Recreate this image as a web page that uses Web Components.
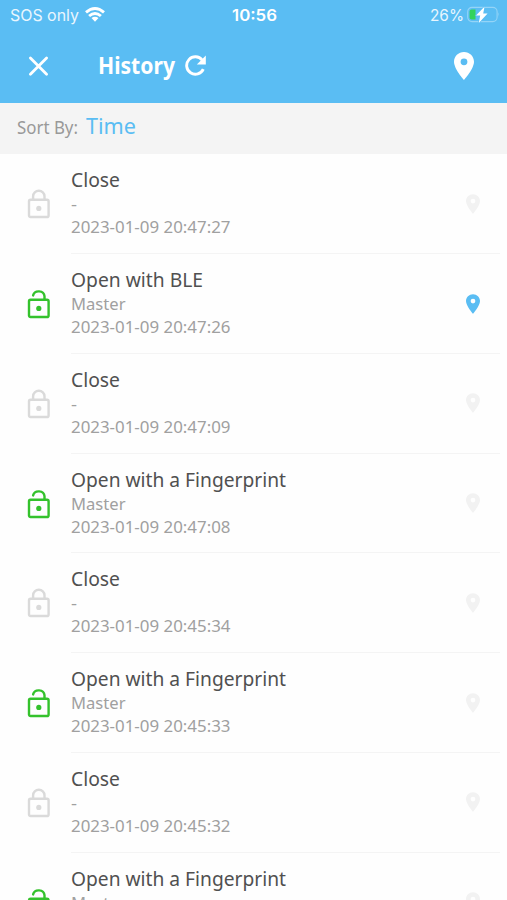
<!DOCTYPE html>
<html lang="en">
<head>
<meta charset="utf-8">
<meta name="viewport" content="width=device-width">
<title>History</title>
<style>
html,body{margin:0;height:100%;overflow:hidden;background:#fefefe}
</style>
</head>
<body>
<history-app></history-app>
<script>
const define = (name, html, setup) => customElements.define(name, class extends HTMLElement {
  connectedCallback() {
    if (this.shadowRoot) return;
    const root = this.attachShadow({ mode: 'open' });
    root.innerHTML = typeof html === 'function' ? html(this) : html;
    if (setup) setup(this, root);
  }
});

// One line of text condensed or widened to the width given in its "w" attribute.
define('fit-text', `<style>:host{display:block;white-space:nowrap}span{display:inline-block;transform-origin:0 50%}</style><span><slot></slot></span>`,
  (host, root) => {
    const w = Number(host.getAttribute('w'));
    const span = root.querySelector('span');
    host.style.width = w + 'px';
    const natural = span.getBoundingClientRect().width;
    if (w && natural) span.style.transform = `scaleX(${w / natural})`;
  });

define('map-pin', `<style>:host{display:block}svg{display:block;width:100%;height:100%}</style>
<svg viewBox="0 0 20 28"><path fill="currentColor" fill-rule="evenodd" d="M10 0C4.4 0 0 4.3 0 9.8C0 17 10 28 10 28S20 17 20 9.8C20 4.3 15.6 0 10 0ZM10 6.4a3.4 3.4 0 1 1 0 6.8a3.4 3.4 0 0 1 0-6.8Z"/></svg>`);

define('lock-icon', host => `<style>:host{display:block;width:24px;height:30px}svg{display:block}</style>
<svg width="24" height="30" viewBox="0 0 24 30" fill="none" stroke="currentColor" stroke-width="2.4">
<rect x="2" y="10.8" width="19.6" height="17.2" rx="1.6"/>
<path stroke-linecap="round" d="${host.hasAttribute('open') ? 'M6.1 6.4A5.8 5.3 0 0 1 17.5 7.2V10.5' : 'M6.1 10.5V7.2A5.7 5.5 0 0 1 17.5 7.2V10.5'}"/>
<circle cx="11.8" cy="19.4" r="2.6" fill="currentColor" stroke="none"/></svg>`);

define('status-bar', `<style>
:host{display:grid;grid-template-columns:1fr auto 1fr;align-items:center;height:30px;box-sizing:border-box;padding:0 7px 0 10px;font:16px/20px Inter,sans-serif;color:#e9f6fe}
div{display:flex;align-items:center}
.l{gap:6px}.r{justify-content:flex-end;gap:3px}
.t{font-weight:600;color:#fff;margin-left:-2px}
svg{display:block}
</style>
<div class="l"><fit-text w="69">SOS only</fit-text>
<svg width="20" height="16" viewBox="0 0 20 16" fill="none" stroke="#fff" stroke-width="2.9"><path d="M1 5.4Q10-2.3 19 5.4M4.1 9Q10 3.8 15.9 9"/><path fill="#fff" stroke="none" d="M6.5 11.1Q10 8.3 13.5 11.1L10 14.8Z"/></svg></div>
<div class="t"><fit-text w="45">10:56</fit-text></div>
<div class="r"><fit-text w="34">26%</fit-text>
<svg width="33" height="18" viewBox="0 0 33 18"><rect x=".7" y="1.4" width="29.4" height="14.2" rx="4.3" fill="none" stroke="#94d4f7" stroke-width="1.1"/><path d="M31.4 6.3q1.5 2.2 0 4.4z" fill="#94d4f7"/><path d="M4.6 3.5H8.5V13.5H4.6Q2.6 13.5 2.6 11.5V5.5Q2.6 3.5 4.6 3.5Z" fill="#32d35b"/><path d="M17.6 .4L9 9.5H13.2L11.8 17L20.6 7.6H16.2Z" fill="#fff" stroke="#5abdf3" stroke-width="1.2" paint-order="stroke"/></svg></div>`);

define('nav-bar', `<style>
:host{display:flex;align-items:center;height:73.4px;box-sizing:border-box;padding:0 33px 1px 28px;color:#fff;font:700 22.5px/30px "Noto Sans",sans-serif}
svg{display:block}
.x{margin-right:49px}
fit-text{margin-right:10px}
map-pin{width:20px;height:28px;margin-left:auto}
</style>
<svg class="x" width="21" height="21" viewBox="0 0 21 21" stroke="#fff" stroke-width="2.8" stroke-linecap="round"><path d="M2.4 2L18.6 18.2M18.6 2L2.4 18.2"/></svg>
<fit-text w="77">History</fit-text>
<svg width="22" height="22" viewBox="0 0 22 22"><path d="M18.3 14.1A8.7 8.7 0 1 1 17.2 5.1" fill="none" stroke="#fff" stroke-width="2.9"/><path d="M20.8 .6V9.6H11.8Z" fill="#fff"/></svg>
<map-pin></map-pin>`);

define('sort-bar', `<style>
:host{display:flex;align-items:baseline;gap:8px;height:51px;box-sizing:border-box;padding:7px 17px 0;background:#f4f4f4;font:17.5px/30px "Noto Sans",sans-serif;color:#999}
.v{font-size:22px;color:#5abdf3}
</style><fit-text w="61">Sort By:</fit-text><fit-text class="v" w="50">Time</fit-text>`);

define('history-row', host => `<style>
:host{display:flex;height:99.75px;box-sizing:border-box;padding-left:27px;font-family:"Noto Sans",sans-serif}
lock-icon{margin:35px 20px 0 0;color:${host.hasAttribute('open') ? '#34c22c' : '#dadada'};flex:none}
.b{flex:1;display:flex;align-items:flex-start;margin-right:7px;border-bottom:1.5px solid #f4f4f4;box-sizing:border-box}
.t{flex:1;padding-top:14px}
.a{font-size:19.8px;line-height:24px;color:#505050}
.c{font-size:17px;line-height:23px;color:#a0a0a0}
map-pin{width:14px;height:20px;margin:39.5px 20px 0 0;color:${host.hasAttribute('located') ? '#5abdf3' : '#f2f2f2'}}
</style>
<lock-icon ${host.hasAttribute('open') ? 'open' : ''}></lock-icon>
<div class="b"><div class="t">
<fit-text class="a" w="${host.getAttribute('tw')}"><slot></slot></fit-text>
<fit-text class="c" w="${host.getAttribute('who') === '-' ? 6 : 54.5}">${host.getAttribute('who')}</fit-text>
${host.hasAttribute('time') ? `<fit-text class="c" w="159.5">2023-01-09 ${host.getAttribute('time')}</fit-text>` : ''}
</div><map-pin></map-pin></div>`);

define('history-app', `<style>
:host{display:flex;flex-direction:column;height:900px;overflow:hidden;background:#fefefe}
header{flex:none;background:#5abdf3}
sort-bar,history-row{flex:none}
</style>
<header><status-bar></status-bar><nav-bar></nav-bar></header>
<sort-bar></sort-bar>
<history-row tw="49" who="-" time="20:47:27">Close</history-row>
<history-row open located tw="132" who="Master" time="20:47:26">Open with BLE</history-row>
<history-row tw="49" who="-" time="20:47:09">Close</history-row>
<history-row open tw="215" who="Master" time="20:47:08">Open with a Fingerprint</history-row>
<history-row tw="49" who="-" time="20:45:34">Close</history-row>
<history-row open tw="215" who="Master" time="20:45:33">Open with a Fingerprint</history-row>
<history-row tw="49" who="-" time="20:45:32">Close</history-row>
<history-row open tw="215" who="Master">Open with a Fingerprint</history-row>`);
</script>
</body>
</html>
